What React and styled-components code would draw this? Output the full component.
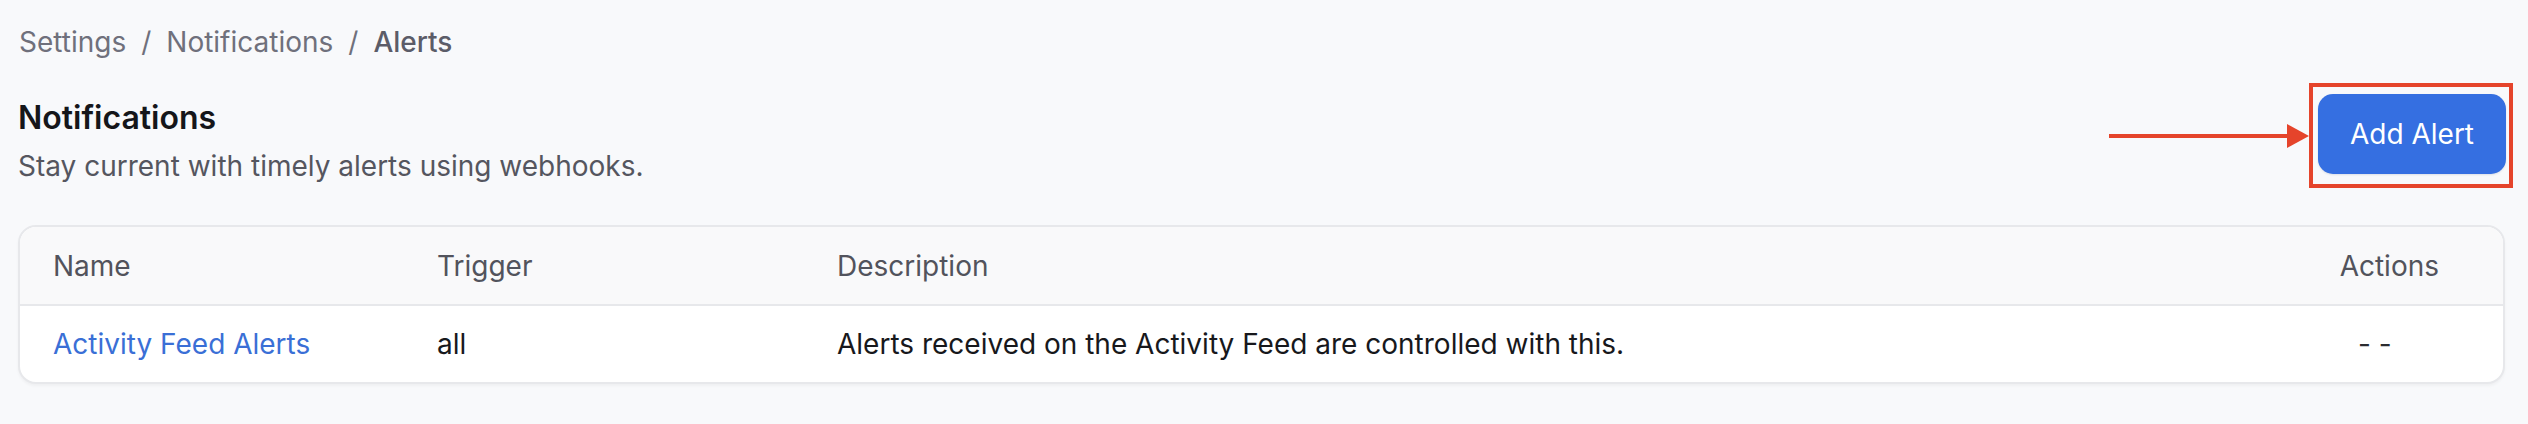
import React from 'react';
import styled, { createGlobalStyle } from 'styled-components';

const alerts = [
  {
    id: 'activity-feed',
    name: 'Activity Feed Alerts',
    trigger: 'all',
    description: 'Alerts received on the Activity Feed are controlled with this.',
  },
];

function App() {
  return (
    <Page>
      <GlobalStyle />
      <Breadcrumb>
        <Crumb>Settings</Crumb>
        <Separator>/</Separator>
        <Crumb>Notifications</Crumb>
        <Separator>/</Separator>
        <Crumb current>Alerts</Crumb>
      </Breadcrumb>

      <HeaderRow>
        <TitleBlock>
          <Title>Notifications</Title>
          <Subtitle>Stay current with timely alerts using webhooks.</Subtitle>
        </TitleBlock>
        <ActionGroup>
          <Arrow width='200' height='24' viewBox='0 0 200 24'>
            <line x1='0' y1='12' x2='180' y2='12' stroke='#e5442b' strokeWidth='4' />
            <polygon points='178,0 200,12 178,24' fill='#e5442b' />
          </Arrow>
          <Highlight>
            <AddButton type='button'>Add Alert</AddButton>
          </Highlight>
        </ActionGroup>
      </HeaderRow>

      <TableCard>
        <HeadRow>
          <HeadCell>Name</HeadCell>
          <HeadCell>Trigger</HeadCell>
          <HeadCell>Description</HeadCell>
          <HeadCell alignRight>Actions</HeadCell>
        </HeadRow>
        {alerts.map((a) => (
          <BodyRow key={a.id}>
            <Cell>
              <NameLink href='#'>{a.name}</NameLink>
            </Cell>
            <Cell>{a.trigger}</Cell>
            <Cell>{a.description}</Cell>
            <ActionCell>- -</ActionCell>
          </BodyRow>
        ))}
      </TableCard>
    </Page>
  );
}

export default App;

const GlobalStyle = createGlobalStyle`
  * {
    box-sizing: border-box;
  }
  body {
    margin: 0;
    background: #f8f9fb;
    font-family: Inter, 'Noto Sans', sans-serif;
    -webkit-font-smoothing: antialiased;
  }
`;

const Page = styled.div`
  min-height: 424px;
  padding: 24px 23px 0 18px;
  background: #f8f9fb;
`;

const Breadcrumb = styled.nav`
  display: flex;
  align-items: center;
  font-size: 28px;
  line-height: 36px;
  padding-left: 1px;
`;

const Crumb = styled.span`
  color: ${(p) => (p.current ? '#5b5c68' : '#6f707c')};
  font-weight: ${(p) => (p.current ? 500 : 400)};
`;

const Separator = styled.span`
  color: #6f707c;
  margin: 0 15px;
`;

const HeaderRow = styled.div`
  display: flex;
  justify-content: space-between;
  align-items: flex-start;
  margin-top: 23px;
`;

const TitleBlock = styled.div`
  padding-top: 15px;
`;

const Title = styled.h1`
  margin: 0;
  font-size: 32px;
  line-height: 40px;
  font-weight: 600;
  color: #15161a;
`;

const Subtitle = styled.p`
  margin: 10px 0 0;
  font-size: 28px;
  line-height: 36px;
  color: #55565f;
`;

const ActionGroup = styled.div`
  display: flex;
  align-items: center;
  margin-right: -8px;
`;

const Arrow = styled.svg`
  display: block;
  flex-shrink: 0;
`;

const Highlight = styled.div`
  border: 4px solid #e5442b;
  padding: 7px 3px 10px 5px;
`;

const AddButton = styled.button`
  display: flex;
  align-items: center;
  justify-content: center;
  width: 188px;
  height: 80px;
  border: none;
  border-radius: 15px;
  background: #356fe1;
  color: #ffffff;
  font-family: Inter, 'Noto Sans', sans-serif;
  font-size: 28px;
  font-weight: 400;
  cursor: pointer;
  box-shadow: 0 1px 2px rgba(20, 40, 90, 0.12);
`;

const TableCard = styled.div`
  margin-top: 37px;
  border: 2px solid #e7e8eb;
  border-radius: 18px;
  overflow: hidden;
  background: #ffffff;
  box-shadow: 0 2px 3px rgba(0, 0, 0, 0.04);
`;

const Row = styled.div`
  display: grid;
  grid-template-columns: 384px 400px 1fr 200px;
  align-items: center;
`;

const HeadRow = styled(Row)`
  height: 79px;
  background: #f9f9fa;
  border-bottom: 2px solid #e7e8eb;
`;

const BodyRow = styled(Row)`
  height: 76px;
`;

const HeadCell = styled.div`
  padding: ${(p) => (p.alignRight ? '0 64px 0 0' : '0 0 0 33px')};
  text-align: ${(p) => (p.alignRight ? 'right' : 'left')};
  font-size: 28px;
  color: #52535c;
`;

const Cell = styled.div`
  padding-left: 33px;
  font-size: 28px;
  color: #17181c;
  white-space: nowrap;
`;

const ActionCell = styled(Cell)`
  padding-left: 55px;
  color: #2b2c30;
`;

const NameLink = styled.a`
  color: #3a6fd6;
  text-decoration: none;
`;
